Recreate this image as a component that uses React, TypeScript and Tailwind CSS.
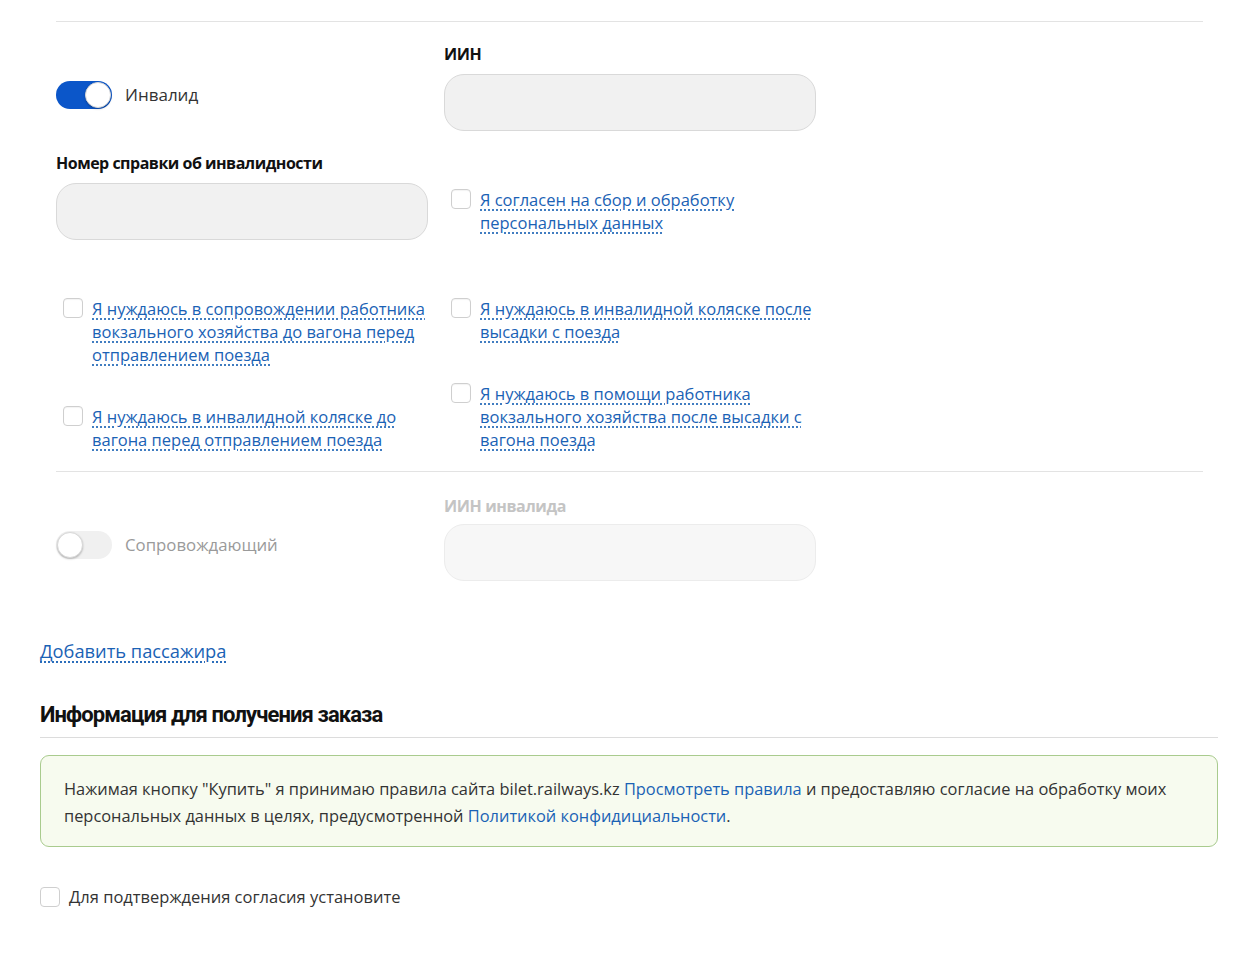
import React from "react";

const font = { fontFamily: '"Open Sans", "Noto Sans", sans-serif' };

function Toggle({ on }: { on: boolean }) {
  return (
    <div
      className={
        "relative h-7 w-14 shrink-0 rounded-full " +
        (on ? "bg-[#0b56c9]" : "bg-[#f0f0f0]")
      }
    >
      <div
        className={
          "absolute top-[1px] h-[26px] w-[26px] rounded-full border border-[#d8d8d8] bg-white shadow-[0_1px_2px_rgba(0,0,0,0.25)] " +
          (on ? "right-[1px]" : "left-[1px]")
        }
      />
    </div>
  );
}

function Box() {
  return (
    <div className="mt-[1px] h-5 w-5 shrink-0 rounded-[4px] border border-[#cfcfcf] bg-white shadow-[inset_0_1px_1px_rgba(0,0,0,0.05)]" />
  );
}

function LinkCheck({ lines }: { lines: string }) {
  return (
    <div className="flex items-start gap-[9px] pl-[7px]">
      <Box />
      <span className="text-[16.5px] leading-[23px] text-[#1a62b5] underline decoration-dotted decoration-[#1a62b5] underline-offset-[4px]">
        {lines}
      </span>
    </div>
  );
}

function Input({ disabled }: { disabled?: boolean }) {
  return (
    <div
      className={
        "h-[57px] w-[372px] rounded-[20px] border " +
        (disabled
          ? "border-[#ececec] bg-[#f7f7f7]"
          : "border-[#d9d9d9] bg-[#f1f1f1]")
      }
    />
  );
}

export default function App() {
  return (
    <div className="min-h-[963px] w-[1257px] bg-white" style={font}>
      <div className="px-[40px] pr-[39px]">
        {/* passenger block */}
        <div className="pl-4 pr-[15px]">
          <div className="mt-[21px] border-t border-[#e3e3e3]" />

          <div className="mt-[22px] grid grid-cols-[372px_372px] gap-x-4">
            {/* row 1 */}
            <div className="flex items-center gap-[13px] pt-[15px]">
              <Toggle on />
              <span className="text-[17px] text-[#333]">Инвалид</span>
            </div>
            <div>
              <div className="mb-[10px] text-[16px] font-bold leading-[20px] tracking-[-0.4px] text-[#111]">
                ИИН
              </div>
              <Input />
            </div>

            {/* row 2 */}
            <div className="mt-[22px]">
              <div className="mb-[10px] text-[16px] font-bold leading-[20px] tracking-[-0.5px] text-[#111]">
                Номер справки об инвалидности
              </div>
              <Input />
            </div>
            <div className="mt-[57px]">
              <LinkCheck lines={"Я согласен на сбор и обработку персональных данных"} />
            </div>

            {/* row 3 */}
            <div className="mt-[57px] flex flex-col gap-[39px]">
              <LinkCheck lines="Я нуждаюсь в сопровождении работника вокзального хозяйства до вагона перед отправлением поезда" />
              <LinkCheck lines="Я нуждаюсь в инвалидной коляске до вагона перед отправлением поезда" />
            </div>
            <div className="mt-[57px] flex flex-col gap-[39px]">
              <LinkCheck lines="Я нуждаюсь в инвалидной коляске после высадки с поезда" />
              <LinkCheck lines="Я нуждаюсь в помощи работника вокзального хозяйства после высадки с вагона поезда" />
            </div>
          </div>

          <div className="mt-[20px] border-t border-[#e3e3e3]" />

          <div className="mt-[24px] grid grid-cols-[372px_372px] gap-x-4">
            <div className="flex items-center gap-[13px] pt-[13px]">
              <Toggle on={false} />
              <span className="text-[16.8px] text-[#9a9a9a]">Сопровождающий</span>
            </div>
            <div>
              <div className="mb-[8px] text-[16px] font-bold leading-[20px] tracking-[-0.4px] text-[#c4c4c4]">
                ИИН инвалида
              </div>
              <Input disabled />
            </div>
          </div>
        </div>

        <div className="mt-[58px]">
          <span className="text-[18.3px] leading-[24px] text-[#1a62b5] underline decoration-dotted decoration-[#1a62b5] underline-offset-[4px]">
            Добавить пассажира
          </span>
        </div>

        <h2
          className="mt-[38px] text-[22px] font-bold leading-[26px] tracking-[-0.9px] text-[#111]"
          style={{ fontFamily: '"Roboto", "Open Sans", sans-serif' }}
        >
          Информация для получения заказа
        </h2>
        <div className="mt-[9px] border-t border-[#dcdcdc]" />

        <div className="mt-[17px] rounded-[9px] border border-[#a9cb8e] bg-[#f7fbef] px-[23px] pb-[17px] pt-[19px] text-[16.4px] leading-[27px] text-[#333]">
          Нажимая кнопку "Купить" я принимаю правила сайта bilet.railways.kz{" "}
          <span className="text-[#1a62b5]">Просмотреть правила</span> и
          предоставляю согласие на обработку моих персональных данных в целях,
          предусмотренной{" "}
          <span className="text-[#1a62b5]">Политикой конфидициальности</span>.
        </div>

        <div className="mt-[38px] flex items-center gap-[9px]">
          <div className="h-5 w-5 rounded-[4px] border border-[#cfcfcf] bg-white" />
          <span className="text-[16.5px] text-[#333]">
            Для подтверждения согласия установите
          </span>
        </div>
      </div>
    </div>
  );
}
